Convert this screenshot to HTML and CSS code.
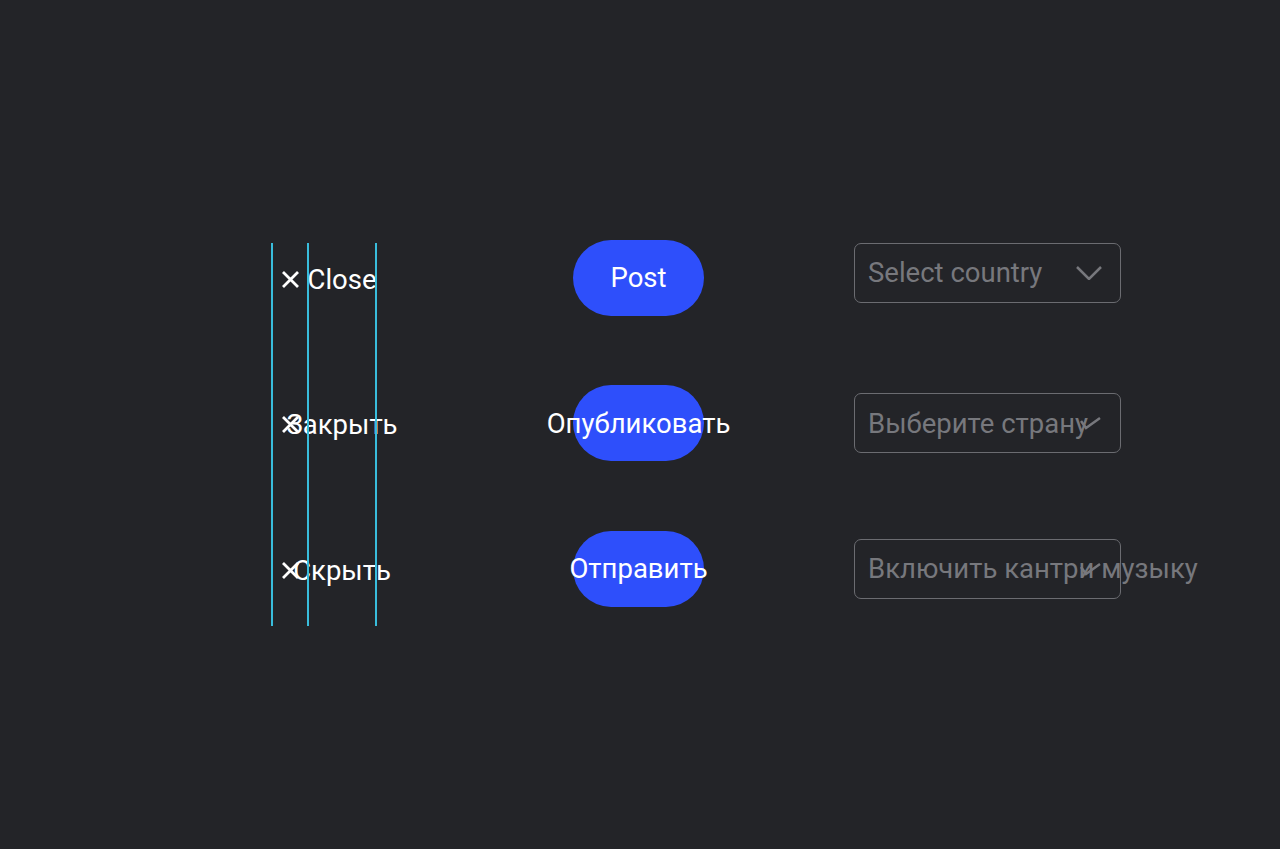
FILE: index.html
```html
<!DOCTYPE html>
<html lang="en">
<head>
    <meta charset="UTF-8">
    <meta name="viewport" content="width=device-width, initial-scale=1.0">
    <title>Localization overflow</title>
    <link rel="stylesheet" href="styles.css">
</head>
<body>
    <main class="board">
        <!-- Close buttons with the layout guides drawn over them -->
        <section class="column column-close">
            <div class="guides">
                <span class="guide guide-edge"></span>
                <span class="guide guide-text-start"></span>
                <span class="guide guide-text-end"></span>
            </div>

            <div class="cell">
                <button class="close-btn">
                    <svg class="close-icon" width="19" height="19" viewBox="0 0 19 19">
                        <path d="M2 2 L17 17 M17 2 L2 17" />
                    </svg>
                    <span class="close-label"><span>Close</span></span>
                </button>
            </div>
            <div class="cell">
                <button class="close-btn">
                    <svg class="close-icon" width="19" height="19" viewBox="0 0 19 19">
                        <path d="M2 2 L17 17 M17 2 L2 17" />
                    </svg>
                    <span class="close-label"><span>Закрыть</span></span>
                </button>
            </div>
            <div class="cell">
                <button class="close-btn">
                    <svg class="close-icon" width="19" height="19" viewBox="0 0 19 19">
                        <path d="M2 2 L17 17 M17 2 L2 17" />
                    </svg>
                    <span class="close-label"><span>Скрыть</span></span>
                </button>
            </div>
        </section>

        <!-- Primary pill buttons -->
        <section class="column">
            <div class="cell">
                <button class="pill-btn"><span>Post</span></button>
            </div>
            <div class="cell">
                <button class="pill-btn"><span>Опубликовать</span></button>
            </div>
            <div class="cell">
                <button class="pill-btn"><span>Отправить</span></button>
            </div>
        </section>

        <!-- Dropdowns -->
        <section class="column">
            <div class="cell">
                <div class="select select-first">
                    <span class="select-text">Select country</span>
                    <svg class="chevron" width="26" height="14" viewBox="0 0 26 14">
                        <path d="M1 1 L13 13 L25 1" />
                    </svg>
                </div>
            </div>
            <div class="cell">
                <div class="select">
                    <span class="select-text">Выберите страну</span>
                    <svg class="chevron chevron-squeezed" width="21" height="14" viewBox="0 0 21 14">
                        <path d="M1 5 L6 12 L20 2" />
                    </svg>
                </div>
            </div>
            <div class="cell">
                <div class="select">
                    <span class="select-text">Включить кантри музыку</span>
                    <svg class="chevron chevron-squeezed" width="21" height="14" viewBox="0 0 21 14">
                        <path d="M1 5 L6 12 L20 2" />
                    </svg>
                </div>
            </div>
        </section>
    </main>
</body>
</html>
```

FILE: styles.css
```css
:root {
    --bg-color: #232428;
    --primary-color: #2e4ffb;
    --guide-color: #39bddc;
    --field-border: #6b6c71;
    --field-text: #77787d;
    --text-color: #ffffff;
}

body {
    margin: 0;
    min-height: 100vh;
    background-color: var(--bg-color);
    font-family: 'Roboto', 'Noto Sans', sans-serif;
    color: var(--text-color);
}

.board {
    display: grid;
    grid-template-columns: 302px 281px 267px;
    padding: 205px 0 0 271px;
}

.column {
    display: flex;
    flex-direction: column;
}

.column-close {
    position: relative;
}

.cell {
    height: 145.5px;
    display: flex;
    align-items: center;
}

/* Guides */
.guides {
    position: absolute;
    top: 38px;
    left: 0;
    width: 110px;
    height: 383px;
    pointer-events: none;
    z-index: 1;
}

.guide {
    position: absolute;
    top: 0;
    bottom: 0;
    width: 2px;
    background: var(--guide-color);
}

.guide-edge {
    left: 0;
}

.guide-text-start {
    left: 36px;
}

.guide-text-end {
    left: 104px;
}

/* Close button */
.close-btn {
    display: flex;
    align-items: center;
    gap: 8px;
    margin-top: 3px;
    padding: 0 0 0 10px;
    background: none;
    border: none;
    color: var(--text-color);
    font-family: inherit;
    font-size: 27.5px;
    cursor: pointer;
}

.close-icon {
    flex-shrink: 0;
}

.close-icon path {
    stroke: var(--text-color);
    stroke-width: 2.8;
    fill: none;
}

.close-label {
    width: 68px;
    display: flex;
    justify-content: center;
    white-space: nowrap;
}

/* Pill button */
.pill-btn {
    width: 131px;
    height: 76px;
    padding: 0;
    display: flex;
    justify-content: center;
    align-items: center;
    border: none;
    border-radius: 38px;
    background-color: var(--primary-color);
    color: var(--text-color);
    font-family: inherit;
    font-size: 27.5px;
    white-space: nowrap;
    cursor: pointer;
}

/* Select */
.select {
    box-sizing: border-box;
    width: 267px;
    height: 60px;
    display: flex;
    align-items: center;
    padding: 0 18px 0 13px;
    border: 1.5px solid var(--field-border);
    border-radius: 7px;
    color: var(--field-text);
    font-size: 27.5px;
}

.select-first {
    margin-top: -10px;
}

.select-text {
    flex: 1;
    min-width: 0;
    white-space: nowrap;
}

.chevron {
    flex-shrink: 0;
}

.chevron path {
    stroke: var(--field-text);
    stroke-width: 2.5;
    fill: none;
}

.chevron-squeezed {
    margin-right: 1px;
}
```
